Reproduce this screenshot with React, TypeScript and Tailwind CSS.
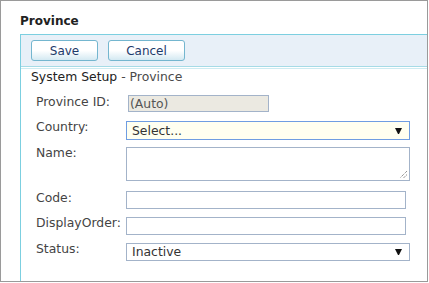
import React from "react";

const font = { fontFamily: '"DejaVu Sans", Verdana, sans-serif' };

function Arrow() {
  return (
    <svg width="7" height="6" viewBox="0 0 7 6" className="absolute right-[7px] top-1/2 -translate-y-1/2">
      <polygon points="0,0 7,0 4,6 3,6" fill="#111" />
    </svg>
  );
}

export default function App() {
  return (
    <div className="w-[429px] h-[283px] bg-white" style={font}>
      <div className="w-[428px] h-[282px] border border-[#9a9a9a] overflow-hidden flex flex-col">
        <div className="pl-[19px] pt-[13px] text-[12px] leading-[15px] font-bold text-[#222]">Province</div>
        <div className="ml-[19px] mt-[5px] flex-1 border-l border-t border-[#7ccfe0] flex flex-col">
          <div className="h-[32px] bg-[#e8f0f8] pl-[10px] pt-[5px] flex gap-[10px] border-b border-[#a6dbe6]">
            <div className="w-[67px] h-[21px] rounded-[3px] border border-[#74b6cf] bg-gradient-to-b from-white via-white to-[#d4e9f2] flex items-center justify-center text-[12px] text-[#1e3a6a]">
              Save
            </div>
            <div className="w-[77px] h-[21px] rounded-[3px] border border-[#74b6cf] bg-gradient-to-b from-white via-white to-[#d4e9f2] flex items-center justify-center text-[12px] text-[#1e3a6a]">
              Cancel
            </div>
          </div>
          <div className="h-[2px] border-b border-[#cdebf1]" />
          <div className="pl-[10px] text-[12.4px] leading-[15px]">
            <span className="text-[#222]">System Setup</span>
            <span className="text-[#4a4a4a]"> - Province</span>
          </div>
          <div className="pl-[15px] pt-[10px] text-[12.4px] leading-[15px] text-[#444] flex flex-col">
            <div className="h-[25px] flex items-start">
              <div className="w-[90px] shrink-0">Province ID:</div>
              <div className="ml-[2px] mt-[1px] w-[141px] h-[17px] border border-[#a3b3c9] bg-[#ebe9e1] pl-[1px] text-[#555] leading-[15px]">
                (Auto)
              </div>
            </div>
            <div className="h-[26px] flex items-start">
              <div className="w-[90px] shrink-0">Country:</div>
              <div className="relative mt-[2px] w-[284px] h-[19px] border border-[#6f9de2] bg-[#fffff0] pl-[5px] text-[#333] leading-[17px]">
                Select...
                <Arrow />
              </div>
            </div>
            <div className="h-[45px] flex items-start">
              <div className="w-[90px] shrink-0">Name:</div>
              <div className="relative mt-[2px] w-[284px] h-[34px] border border-[#a3b3c9] bg-white">
                <svg width="10" height="10" viewBox="0 0 10 10" className="absolute right-[1px] bottom-[1px]">
                  <line x1="9" y1="2" x2="2" y2="9" stroke="#666" strokeWidth="1" strokeDasharray="1 1" />
                  <line x1="9" y1="5.5" x2="5.5" y2="9" stroke="#666" strokeWidth="1" strokeDasharray="1 1" />
                </svg>
              </div>
            </div>
            <div className="h-[25px] flex items-start">
              <div className="w-[90px] shrink-0">Code:</div>
              <div className="mt-[1px] w-[280px] h-[18px] border border-[#a3b3c9] bg-white" />
            </div>
            <div className="h-[26px] flex items-start">
              <div className="w-[90px] shrink-0 whitespace-nowrap">DisplayOrder:</div>
              <div className="mt-[2px] w-[280px] h-[18px] border border-[#a3b3c9] bg-white" />
            </div>
            <div className="h-[26px] flex items-start">
              <div className="w-[90px] shrink-0">Status:</div>
              <div className="relative mt-[2px] w-[284px] h-[18px] border border-[#a3b3c9] bg-white pl-[5px] text-[#333] leading-[16px]">
                Inactive
                <Arrow />
              </div>
            </div>
          </div>
        </div>
      </div>
    </div>
  );
}
